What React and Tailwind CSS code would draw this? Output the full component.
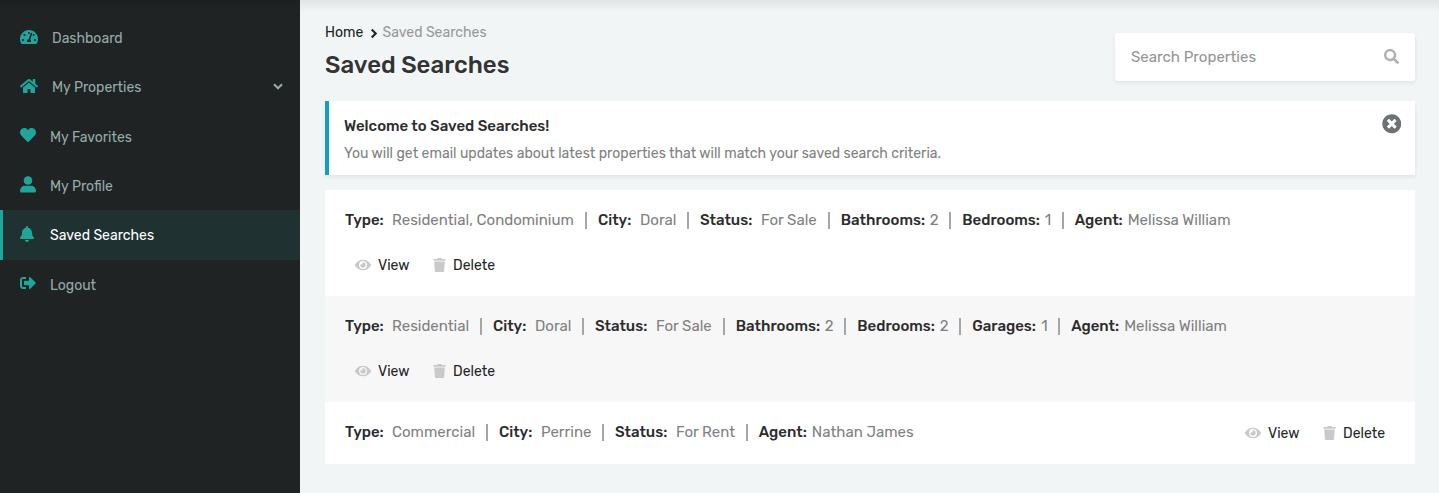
import { Fragment } from "react";
import {
  FaTachometerAlt,
  FaHome,
  FaHeart,
  FaBell,
  FaSignOutAlt,
  FaSearch,
  FaEye,
  FaTrash,
  FaTimesCircle,
} from "react-icons/fa";

const Chevron = ({ className }) => (
  <svg viewBox="0 0 10 7" className={className} fill="none">
    <path d="m1 1.2 4 4 4-4" stroke="currentColor" strokeWidth="2.1" />
  </svg>
);

const UserIcon = () => (
  <svg viewBox="0 0 16 17" className="h-[17px] w-4" fill="currentColor">
    <circle cx="8" cy="4.5" r="4.3" />
    <path d="M4.8 9.8h6.4a4.7 4.7 0 0 1 4.7 4.7v.8a1.2 1.2 0 0 1-1.2 1.2H1.3A1.2 1.2 0 0 1 .1 15.3v-.8a4.7 4.7 0 0 1 4.7-4.7z" />
  </svg>
);

const nav = [
  { label: "Dashboard", icon: <FaTachometerAlt className="h-4 w-[18px]" />, slot: "w-8", text: "pt-px" },
  { label: "My Properties", icon: <FaHome className="h-4 w-[18px]" />, slot: "w-8", text: "pt-px", open: true },
  { label: "My Favorites", icon: <FaHeart className="size-4" />, slot: "w-[30px]", text: "pt-[2px]" },
  { label: "My Profile", icon: <UserIcon />, slot: "w-[30px]", text: "pt-px" },
  { label: "Saved Searches", icon: <FaBell className="h-4 w-[14px]" />, slot: "w-[30px]", text: "pt-px", active: true },
  { label: "Logout", icon: <FaSignOutAlt className="size-4" />, slot: "w-[30px]", text: "pt-[2px]" },
];

const type = { label: "Type:", lw: "w-[47px]" };
const city = { label: "City:", lw: "w-[42px]" };
const status = { label: "Status:", lw: "w-[61px]" };
const bath = { label: "Bathrooms:", lw: "w-[89px]" };
const bed = { label: "Bedrooms:", lw: "w-[82.5px]" };
const garages = { label: "Garages:", lw: "w-[69px]" };
const agent = { label: "Agent:", lw: "w-[53px]" };

const searches = [
  [
    { ...type, value: "Residential, Condominium", vw: "w-[182px]" },
    { ...city, value: "Doral", vw: "w-[36px]" },
    { ...status, value: "For Sale", vw: "w-[56px]" },
    { ...bath, value: "2", vw: "w-[8.5px]" },
    { ...bed, value: "1", vw: "w-[6px]" },
    { ...agent, value: "Melissa William", vw: "w-[103px]" },
  ],
  [
    { ...type, value: "Residential", vw: "w-[77px]" },
    { ...city, value: "Doral", vw: "w-[36px]" },
    { ...status, value: "For Sale", vw: "w-[56px]" },
    { ...bath, value: "2", vw: "w-[8.5px]" },
    { ...bed, value: "2", vw: "w-[8.5px]" },
    { ...garages, value: "1", vw: "w-[6px]" },
    { ...agent, value: "Melissa William", vw: "w-[103px]" },
  ],
  [
    { ...type, value: "Commercial", vw: "w-[83px]" },
    { ...city, value: "Perrine", vw: "w-[50px]" },
    { ...status, value: "For Rent", vw: "w-[59px]" },
    { ...agent, value: "Nathan James", vw: "w-[102px]" },
  ],
];

function Sidebar() {
  return (
    <aside className="w-[300px] shrink-0 bg-[#1f2324] pt-[13px]">
      {nav.map((n) => (
        <a
          key={n.label}
          className={`flex h-[49.35px] items-center border-l-[3px] pr-[17.5px] pl-[17px] text-[14px] whitespace-nowrap ${
            n.active ? "border-[#1ea69a] bg-[#1f3131] text-white" : "border-transparent text-[#95aba8]"
          }`}
        >
          <span className={`flex shrink-0 pb-[2px] text-[#1ea69a] ${n.slot}`}>{n.icon}</span>
          <span className={n.text}>{n.label}</span>
          {n.open && <Chevron className="mb-[2px] ml-auto h-[7px] w-[10px]" />}
        </a>
      ))}
    </aside>
  );
}

function Actions() {
  return (
    <div className="flex items-center text-[14px] leading-5 text-[#222] whitespace-nowrap">
      <FaEye className="mb-px h-4 w-4 text-[#c9c9c9]" />
      <span className="ml-[7px] w-[55px] pt-px">View</span>
      <FaTrash className="mb-px h-[14px] w-[13px] text-[#c9c9c9]" />
      <span className="ml-[7px] w-[43px] pt-px">Delete</span>
    </div>
  );
}

function SearchRow({ fields, index }) {
  const inline = index === 2;
  return (
    <div
      className={`flex px-5 ${index === 1 ? "bg-[#f7f7f7]" : "bg-white"} ${
        inline ? "h-[62px] items-start justify-between pt-5" : "h-[106px] flex-col pt-5"
      }`}
    >
      <div className="flex h-5 items-center text-[15px] leading-5 whitespace-nowrap">
        {fields.map((f, i) => (
          <Fragment key={f.label}>
            {i > 0 && <span className="mx-[10.97px] h-[17px] w-[2px] shrink-0 bg-[#a6a6a6]" />}
            <span className={`shrink-0 font-medium text-[#2c2c2c] ${f.lw}`}>{f.label}</span>
            <span className={`shrink-0 text-[#808080] ${f.vw}`}>{f.value}</span>
          </Fragment>
        ))}
      </div>
      <div className={inline ? "mt-px mr-[9px]" : "mt-[25px] ml-[10px]"}>
        <Actions />
      </div>
    </div>
  );
}

export default function App() {
  return (
    <div className="relative flex h-[493px] w-[1439px] overflow-hidden bg-[#f1f5f6] font-[Rubik,Roboto,sans-serif]">
      <Sidebar />
      <main className="flex-1 pr-6 pl-[25px]">
        <header className="flex h-[101px] justify-between">
          <div className="pt-[23px]">
            <div className="flex items-center text-[14px] leading-5 whitespace-nowrap">
              <span className="w-[44px] text-[#222]">Home</span>
              <Chevron className="h-[7px] w-[10px] -rotate-90 text-[#222]" />
              <span className="ml-[3.5px] text-[#999]">Saved Searches</span>
            </div>
            <h1 className="mt-[6px] text-[24px] leading-8 font-medium text-[#333]">Saved Searches</h1>
          </div>
          <div className="mt-[33px] flex h-12 w-[300px] items-center justify-between rounded-[3px] bg-white px-4 shadow-[0_2px_4px_rgba(0,0,0,0.07)]">
            <span className="text-[15px] text-[#949494]">Search Properties</span>
            <FaSearch className="mb-[2px] size-[15px] text-[#b0b0b0]" />
          </div>
        </header>
        <section className="flex h-[74px] justify-between border-l-4 border-[#129fc6] bg-white pr-[14px] pl-[15px] shadow-[0_2px_4px_rgba(0,0,0,0.07)]">
          <div className="pt-[15px] text-[15px] leading-5 whitespace-nowrap">
            <h2 className="font-medium text-[#2c2c2c]">Welcome to Saved Searches!</h2>
            <p className="mt-[8px] text-[14px] tracking-[0.016px] text-[#808080]">
              You will get email updates about latest properties that will match your saved search criteria.
            </p>
          </div>
          <FaTimesCircle className="mt-[13px] size-[19.5px] text-[#6d7276]" />
        </section>
        <section className="mt-[15px]">
          {searches.map((s, i) => (
            <SearchRow key={i} fields={s} index={i} />
          ))}
        </section>
      </main>
      <div className="pointer-events-none absolute inset-x-0 top-0 h-3 bg-linear-to-b from-black/7 to-transparent" />
    </div>
  );
}
